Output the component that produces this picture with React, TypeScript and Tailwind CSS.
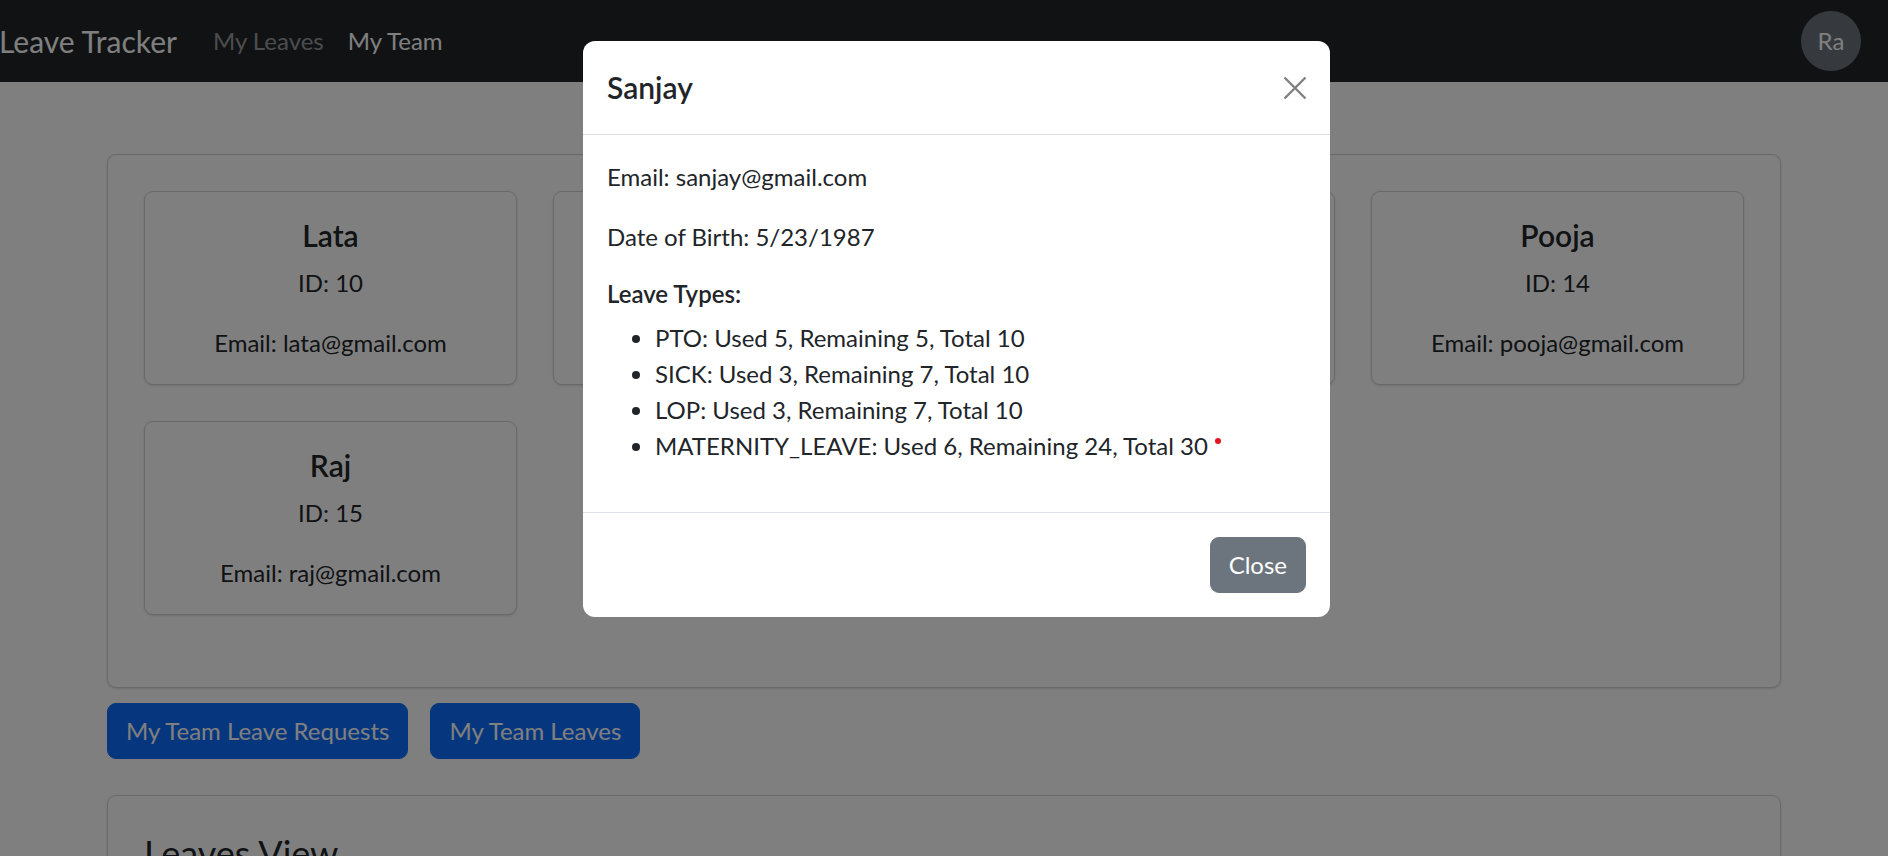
import type { FC } from 'react'

const members = [
  { name: 'Lata', id: 10, email: 'lata@gmail.com' },
  { name: 'Sanjay', id: 11, email: 'sanjay@gmail.com' },
  { name: 'Ravi', id: 12, email: 'ravi@gmail.com' },
  { name: 'Pooja', id: 14, email: 'pooja@gmail.com' },
  { name: 'Raj', id: 15, email: 'raj@gmail.com' },
]

const leaveTypes = [
  { type: 'PTO', used: 5, remaining: 5, total: 10 },
  { type: 'SICK', used: 3, remaining: 7, total: 10 },
  { type: 'LOP', used: 3, remaining: 7, total: 10 },
  { type: 'MATERNITY_LEAVE', used: 6, remaining: 24, total: 30, flag: true },
]

const font = "font-['Segoe_UI','Lato','Liberation_Sans',sans-serif]"

const App: FC = () => {
  return (
    <div className={`relative h-screen overflow-hidden bg-white text-[24px] leading-[36px] text-[#212529] ${font}`}>
      {/* Navbar */}
      <nav className="flex h-[82px] items-center justify-between bg-[#212529] pr-[27px]">
        <div className="flex items-center">
          <span className="-ml-[1px] mr-[24px] text-[30px] text-white">Leave Tracker</span>
          <a className="px-[12px] text-[rgba(255,255,255,0.55)]">My Leaves</a>
          <a className="px-[12px] text-white">My Team</a>
        </div>
        <div className="flex h-[60px] w-[60px] items-center justify-center rounded-full bg-[#6c757d] text-white">
          Ra
        </div>
      </nav>

      {/* Page content */}
      <div className="mx-[107px] mt-[72px]">
        <div className="rounded-[9px] border border-[rgba(0,0,0,0.175)] px-[36px] pb-[72px] pt-[36px] shadow-sm">
          <div className="grid grid-cols-4 gap-x-[36px] gap-y-[36px]">
            {members.map((m) => (
              <div
                key={m.id}
                className="rounded-[9px] border border-[rgba(0,0,0,0.175)] px-[24px] pb-[23px] pt-[25px] text-center shadow-sm"
              >
                <h5 className="mb-[12px] text-[30px] font-semibold leading-[36px]">{m.name}</h5>
                <p className="mb-[24px]">ID: {m.id}</p>
                <p>Email: {m.email}</p>
              </div>
            ))}
          </div>
        </div>

        <div className="mt-[15px] flex gap-[22px]">
          <button className="rounded-[9px] border border-[#0d6efd] bg-[#0d6efd] px-[18px] py-[9px] text-white">
            My Team Leave Requests
          </button>
          <button className="rounded-[9px] border border-[#0d6efd] bg-[#0d6efd] px-[18px] py-[9px] text-white">
            My Team Leaves
          </button>
        </div>

        <div className="mt-[36px] rounded-[9px] border border-[rgba(0,0,0,0.175)] px-[36px] pt-[36px] shadow-sm">
          <h3 className="text-[36px] leading-[43px]">Leaves View</h3>
        </div>
      </div>

      {/* Backdrop */}
      <div className="absolute inset-0 bg-black/50" />

      {/* Modal */}
      <div className="absolute inset-0 flex justify-center pl-[25px] pt-[41px]">
        <div className="h-fit w-[747px] rounded-[12px] bg-white">
          <div className="flex items-center justify-between border-b border-[#dee2e6] p-[24px]">
            <h5 className="text-[30px] font-semibold leading-[45px]">Sanjay</h5>
            <button className="mr-[-1px] flex h-[24px] w-[24px] items-center justify-center">
              <svg viewBox="0 0 16 16" className="h-[24px] w-[24px]" fill="none" stroke="#808080" strokeWidth="1.6">
                <path d="M1 1L15 15M15 1L1 15" />
              </svg>
            </button>
          </div>
          <div className="p-[24px]">
            <p className="mb-[24px]">Email: sanjay@gmail.com</p>
            <p className="mb-[24px]">Date of Birth: 5/23/1987</p>
            <h6 className="mb-[12px] font-semibold leading-[29px]">Leave Types:</h6>
            <ul className="mb-[24px] list-disc pl-[48px]">
              {leaveTypes.map((l) => (
                <li key={l.type}>
                  {l.type}: Used {l.used}, Remaining {l.remaining}, Total {l.total}
                  {l.flag && (
                    <span className="ml-[7px] inline-block h-[6px] w-[6px] -translate-y-[8px] rounded-full bg-[#e8141c] align-middle" />
                  )}
                </li>
              ))}
            </ul>
          </div>
          <div className="flex justify-end border-t border-[#dee2e6] p-[18px]">
            <button className="m-[6px] rounded-[9px] border border-[#6c757d] bg-[#6c757d] px-[18px] py-[9px] text-white">
              Close
            </button>
          </div>
        </div>
      </div>
    </div>
  )
}

export default App
